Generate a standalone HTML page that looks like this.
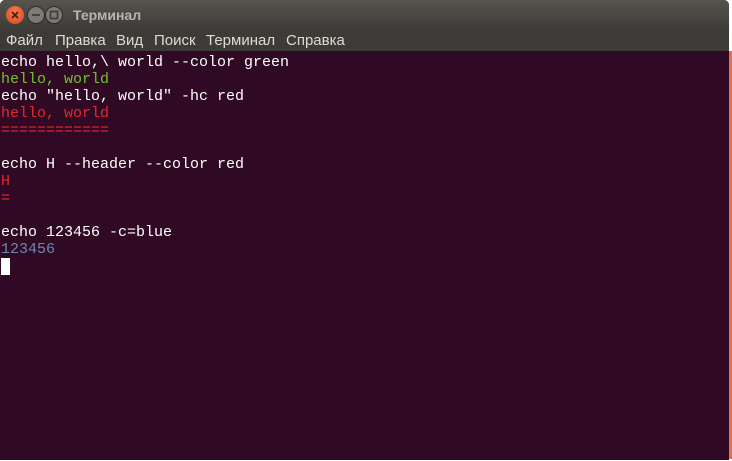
<!DOCTYPE html>
<html><head><meta charset="utf-8"><style>
html,body{margin:0;padding:0;background:#fff;width:732px;height:461px;overflow:hidden}
.win{position:absolute;left:0;top:0;width:729px;height:460px;background:#300a24;border-radius:5px 5px 0 0;overflow:hidden}
.title{position:absolute;left:0;top:0;width:729px;height:30px;background:linear-gradient(#55544f,#3c3b37);font:bold 14px "Liberation Sans",sans-serif;color:#b8b5ae}
.title span{position:absolute;left:73px;top:7px}
.btn{position:absolute;top:6px;width:18px;height:18px;border-radius:50%}
.menu{position:absolute;left:0;top:30px;width:729px;height:21px;background:#3c3b37;font:15px "Liberation Sans","Noto Sans CJK SC",sans-serif;color:#dfdbd2}
.menu span{position:absolute;top:2px}
.term{position:absolute;left:1px;top:54px;font:15px/17px "Liberation Mono","DejaVu Sans Mono",monospace;color:#fff;white-space:pre}
.g{color:#6fc42b}.r{color:#e8262e}.b{color:#6b87b7}
.cur{display:inline-block;width:9px;height:17px;background:#fff;vertical-align:top}
.sb{position:absolute;left:729px;top:51px;width:3px;height:408px;background:#e0714a}
</style></head><body>
<div class="win">
<div class="title">
<div class="btn" style="left:6px;background:radial-gradient(circle at 50% 35%,#f47a50,#d8471c)"><svg width="18" height="18"><path d="M6 6L12 12M12 6L6 12" stroke="#4a1a0a" stroke-width="1.6"/></svg></div>
<div class="btn" style="left:27px;background:#7b7a75;border:1px solid #2d2c29;width:16px;height:16px"><svg width="16" height="16"><path d="M4 8H12" stroke="#3c3b37" stroke-width="1.8"/></svg></div>
<div class="btn" style="left:45px;background:#7b7a75;border:1px solid #2d2c29;width:16px;height:16px"><svg width="16" height="16"><rect x="4.5" y="4.5" width="7" height="7" fill="none" stroke="#3c3b37" stroke-width="1.6"/></svg></div>
<span>Терминал</span>
</div>
<div class="menu"><span style="left:6px">Файл</span><span style="left:55px">Правка</span><span style="left:116px">Вид</span><span style="left:154px">Поиск</span><span style="left:206px">Терминал</span><span style="left:286px">Справка</span></div>
<div class="term">echo hello,\ world --color green
<span class="g">hello, world</span>
echo "hello, world" -hc red
<span class="r">hello, world</span>
<span class="r">============</span>

echo H --header --color red
<span class="r">H</span>
<span class="r">=</span>

echo 123456 -c=blue
<span class="b">123456</span>
<span class="cur"></span></div>
</div>
<div class="sb"></div>
</body></html>
